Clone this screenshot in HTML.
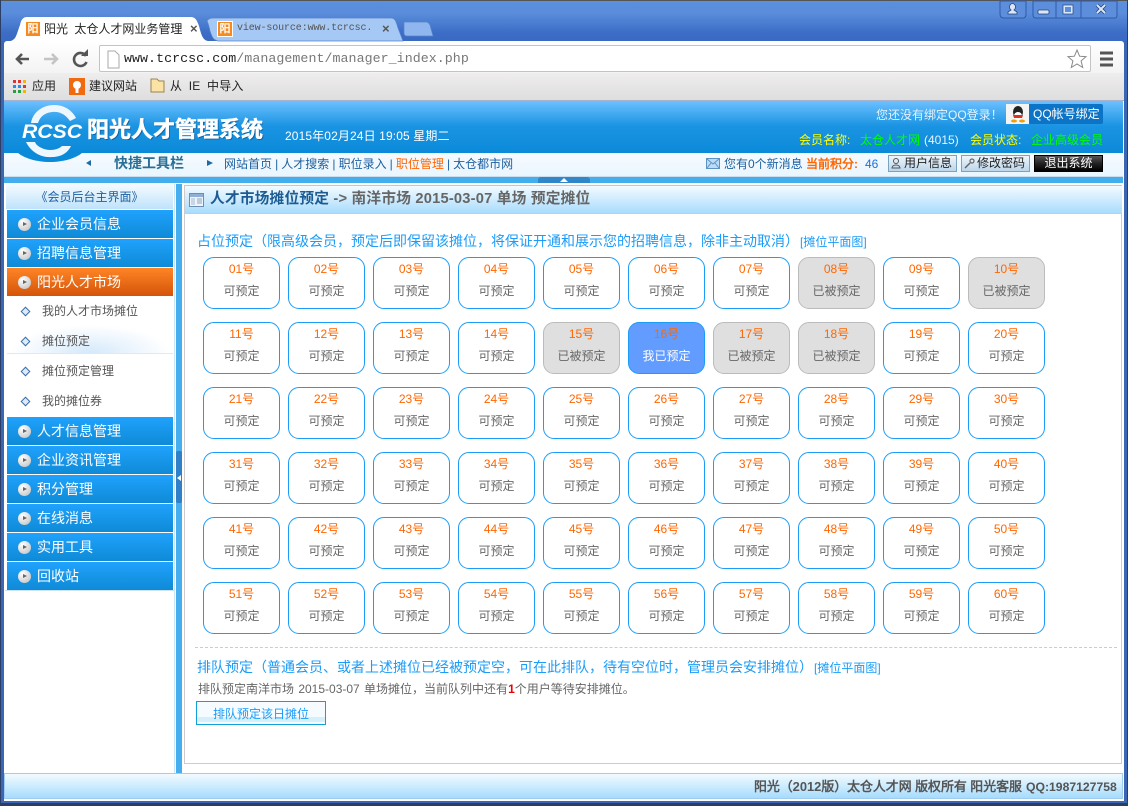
<!DOCTYPE html>
<html><head><meta charset="utf-8"><title>阳光人才管理系统</title><style>
html,body{margin:0;padding:0}
body{width:1128px;height:806px;overflow:hidden;position:relative;background:#3a66b4;font:12px/16px "Liberation Sans","WenQuanYi Zen Hei",sans-serif;color:#666}
div,svg{position:absolute;white-space:nowrap}
.m{left:7px;width:166px;height:28px;background:linear-gradient(#20a2fd,#0e8ad6);color:#fff;font-size:14px;line-height:28px;text-indent:30px}
.m:before{content:"";position:absolute;left:11px;top:8px;width:13px;height:13px;border-radius:7px;background:radial-gradient(circle at 35% 30%,#fff,#ccc 75%,#aaa)}
.m:after{content:"";position:absolute;left:16px;top:12px;border-left:4px solid #666;border-top:2.5px solid transparent;border-bottom:2.5px solid transparent}
.o{background:linear-gradient(#ff8526,#d4540a)}
.s{left:42px;color:#555}
.d{left:22px;width:5px;height:5px;transform:rotate(45deg);border:1px solid #3a6ea8;background:#dfeaf6}
.c{width:75px;height:50px;border:1px solid #1a9cf8;border-radius:11px;background:#fff;text-align:center}
.c u{position:absolute;left:0;right:0;top:3px;text-decoration:none;color:#f60}
.c em{position:absolute;left:0;right:0;top:25px;font-style:normal;color:#666}
.g{background:#dfdfdf;border-color:#bbb}
.y{background:#639cff;border-color:#1a9cf8}
.y em{color:#fff}
.t{color:#1a9cf8;font-size:14px}
.t span{font-size:12px}
.b{top:155px;height:15px;border:1px solid #7ba3c0;background:linear-gradient(#eef5fb,#bcd6ea);color:#222;line-height:15px;text-indent:15px}
</style></head><body>
<div style="left:0;top:0;width:1128px;height:41px;background:linear-gradient(#5b90dd,#5a8ddb 12px,#3c6dc6 32px,#3a69c2);border-top:1px solid #555;box-sizing:border-box"></div>
<div style="left:0;top:0;width:1px;height:806px;background:#2b3f66"></div>
<div style="left:1127px;top:0;width:1px;height:806px;background:#2b3f66"></div>
<div style="left:0;top:803px;width:1128px;height:3px;background:#2b3f66"></div>
<div style="left:4px;top:41px;width:1120px;height:32px;background:linear-gradient(#fff,#f3f3f3);border-radius:3px 3px 0 0"></div>
<div style="left:4px;top:73px;width:1120px;height:27px;background:linear-gradient(#efeded,#dedede)"></div>
<svg style="left:0;top:0" width="1128" height="100">
<path d="M218 41c-5-1-6-4-8-10-1-5-2-8-3-10 1-2 3-3 6-3h178c4 0 5 3 7 10l5 13z" fill="#a6c8f4" stroke="#5584cc" stroke-width=".7"/>
<path d="M404 22h22c2 0 3 1 4 3l3 11h-26c-2 0-3-1-3-3z" fill="#8fb6ee" stroke="#5584cc" stroke-width=".7"/>
<path d="M5 44c2-3 7-2 10-6 2-3 3-8 5-13 1-5 3-8 7-8h164c4 0 6 3 8 9 2 7 3 14 9 15z" fill="#fff"/>
<path d="M1000 1v13c0 3 2 4 4 4h19c2 0 3-1 3-4V1z" fill="#5d8edb" stroke="#2f5aa8"/>
<path d="M1033 1v14c0 2 1 3 3 3h79c1 0 2-1 2-3V1z" fill="#5d8edb" stroke="#2f5aa8"/>
<path d="M1056 1v17M1081 1v17" stroke="#2f5aa8" fill="none"/>
<path d="M1008 14v-2l3-2a3 3.5 0 1 1 3 0l3 2v2z" fill="#dbe6f7" stroke="#24457f" stroke-width=".8"/>
<rect x="1038" y="10" width="11" height="4" rx="1" fill="#dbe6f7" stroke="#24457f" stroke-width=".8"/>
<rect x="1064" y="6" width="8" height="7" fill="none" stroke="#dbe6f7" stroke-width="2"/>
<rect x="1063" y="5" width="10" height="9" fill="none" stroke="#24457f" stroke-width=".7"/>
<path d="M1097 5l8 8M1105 5l-8 8" stroke="#24457f" stroke-width="3.6"/>
<path d="M1097 5l8 8M1105 5l-8 8" stroke="#dbe6f7" stroke-width="2"/>
<path d="M17 59h12M22 54l-5 5 5 5" fill="none" stroke="#555" stroke-width="2.6"/>
<path d="M57 59H44M52 54l5 5-5 5" fill="none" stroke="#c4c4c4" stroke-width="2.6"/>
<path d="M86 56a6.500 6.500 0 1 0 .5 6" fill="none" stroke="#555" stroke-width="2.6"/>
<path d="M81 56h7v-7z" fill="#555"/>
</svg>
<div style="left:26px;top:22px;width:14px;height:14px;background:#f58a1f;color:#fff;font-size:11px;line-height:14px;text-align:center;font-weight:bold">阳</div>
<div style="left:44px;top:21px;color:#222;font-size:12px;width:139px;overflow:hidden;word-spacing:3px">阳光 太仓人才网业务管理</div>
<div style="left:190px;top:21px;color:#555;font-size:13px;font-weight:bold">×</div>
<div style="left:218px;top:22px;width:14px;height:14px;background:#f58a1f;color:#fff;font-size:11px;line-height:14px;text-align:center;font-weight:bold;outline:1px solid #fff">阳</div>
<div style="left:237px;top:21px;width:135px;overflow:hidden;color:#555;font:10px/16px 'Liberation Mono',monospace;letter-spacing:-.12px">view-source:www.tcrcsc.</div>
<div style="left:382px;top:21px;color:#555;font-size:13px;font-weight:bold">×</div>
<div style="left:99px;top:45px;width:990px;height:25px;background:#fff;border:1px solid #c4c4c4;border-radius:2px"></div>
<svg style="left:0;top:41px" width="1128" height="59">
<path d="M108 10h7l4 4v13h-11z" fill="#fff" stroke="#aaa"/>
<path d="M1077 9l2.600 6.200 6.400.5-4.900 4.200 1.600 6.600-5.700-3.500-5.700 3.500 1.600-6.600-4.900-4.200 6.400-.5z" fill="#fff" stroke="#888"/>
<path d="M1100 12h13M1100 18h13M1100 24h13" stroke="#555" stroke-width="3"/>
<rect x="13" y="39" width="3" height="3" fill="#d33"/><rect x="18" y="39" width="3" height="3" fill="#d33"/><rect x="23" y="39" width="3" height="3" fill="#f5b400"/>
<rect x="13" y="44" width="3" height="3" fill="#2a8af0"/><rect x="18" y="44" width="3" height="3" fill="#2a8af0"/><rect x="23" y="44" width="3" height="3" fill="#d33"/>
<rect x="13" y="49" width="3" height="3" fill="#2a9d40"/><rect x="18" y="49" width="3" height="3" fill="#2a9d40"/><rect x="23" y="49" width="3" height="3" fill="#f5b400"/>
<rect x="69" y="37" width="16" height="17" fill="#f06a10"/><circle cx="77" cy="44" r="4" fill="#fff"/><rect x="75.500" y="47" width="3" height="5" fill="#fff"/>
<path d="M151 38h6l2 2h5v11h-13z" fill="#fbe3a6" stroke="#9a8450"/>
</svg>
<div style="left:124px;top:51px;font:13.3px/16px 'Liberation Mono',monospace;color:#222;letter-spacing:.04px">www.tcrcsc.com<span style="color:#777">/management/manager_index.php</span></div>
<div style="left:32px;top:78px;color:#222">应用</div>
<div style="left:89px;top:78px;color:#222">建议网站</div>
<div style="left:170px;top:78px;color:#222;word-spacing:3px;letter-spacing:.2px">从 IE 中导入</div>

<div style="left:4px;top:100px;width:1120px;height:1px;background:#a9b4cc"></div>
<div style="left:4px;top:101px;width:1120px;height:700px;background:#fff"></div>
<div style="left:4px;top:101px;width:1119px;height:52px;background:linear-gradient(#6cc0ff,#1a94e2 25px,#0b8ad9)"></div>
<div style="left:4px;top:153px;width:1119px;height:24px;background:linear-gradient(#f6fbff,#e9f5fe)"></div>
<div style="left:4px;top:176px;width:1119px;height:7px;background:#43aeee;border-top:1px solid #cde;box-sizing:border-box"></div>
<div style="left:538px;top:177px;width:52px;height:6px;background:#2f86c8;border-radius:3px 3px 0 0"></div>
<svg style="left:560px;top:178px" width="8" height="5"><path d="M4 0l4 4H0z" fill="#fff"/></svg>
<svg style="left:0;top:100px" width="100" height="70">
<path d="M18 53C24 58 36 62 50 62S76 58 82 53z" fill="#0b8ad9"/>
<path d="M31 23C33 11 44 5 54 5 64 5 72 10 76 18L70 21C66 15 60 11 52 12 44 13 40 17 38 23z" fill="#eef7fd"/>
<path d="M26 42C31 52 41 58 52 57 60 57 67 54 71 46L62 46C58 50 50 51 44 49 39 47 36 45 35 42z" fill="#eef7fd"/>
<text x="22" y="38" fill="#fff" font-family="Liberation Sans" font-weight="bold" font-style="italic" font-size="19" textLength="60" lengthAdjust="spacingAndGlyphs">RCSC</text>
</svg>
<div style="left:87px;top:113px;color:#fff;font:bold 22px/30px 'Noto Sans CJK SC',sans-serif;-webkit-text-stroke:.5px #fff;text-shadow:1px 1px 0 #0d5f9e">阳光人才管理系统</div>
<div style="left:285px;top:128px;color:#fff;letter-spacing:.12px">2015年02月24日 19:05 星期二</div>
<svg style="left:84px;top:159px" width="130" height="8"><path d="M2 4l5-3v6z" fill="#1f6aa0"/><path d="M129 4l-6-3v6z" fill="#1f6aa0"/></svg>
<div style="left:114px;top:155px;color:#2a6f94;font:bold 14px/16px 'Noto Sans CJK SC',sans-serif">快捷工具栏</div>
<div style="left:224px;top:156px;color:#1d5f9f;word-spacing:-.25px">网站首页 | 人才搜索 | 职位录入 | <span style="color:#f60">职位管理</span> | 太仓都市网</div>
<div style="left:876px;top:107px;color:#e4f3ff">您还没有绑定QQ登录！</div>
<div style="left:1006px;top:104px;width:97px;height:20px;background:#0c74c6;border-radius:2px"></div>
<div style="left:1006px;top:104px;width:23px;height:20px;background:#f4f4f4"></div>
<svg style="left:1009px;top:105px" width="18" height="18"><ellipse cx="9" cy="7" rx="5" ry="6" fill="#222"/><ellipse cx="9" cy="11" rx="4" ry="4" fill="#fff"/><path d="M4 10h10l-1 3H5z" fill="#e0301e"/><ellipse cx="5" cy="16" rx="3" ry="1.5" fill="#f5a000"/><ellipse cx="13" cy="16" rx="3" ry="1.5" fill="#f5a000"/></svg>
<div style="left:1033px;top:106px;color:#fff">QQ帐号绑定</div>
<div style="left:799px;top:132px;color:#ff0">会员名称:</div>
<div style="left:860px;top:132px;color:#0f0">太仓人才网</div>
<div style="left:924px;top:132px;color:#e8f4ff">(4015)</div>
<div style="left:970px;top:132px;color:#ff0">会员状态:</div>
<div style="left:1031px;top:132px;color:#0f0">企业高级会员</div>
<svg style="left:706px;top:158px" width="14" height="12"><rect x=".5" y=".5" width="13" height="10" fill="#bcdcf6" stroke="#5b93c4"/><path d="M1 1l6 5 6-5M1 10l4-5M13 10l-4-5" fill="none" stroke="#5b93c4"/></svg>
<div style="left:724px;top:156px;color:#1d5f9f">您有0个新消息</div>
<div style="left:806px;top:156px;color:#f60;font-weight:bold">当前积分:</div>
<div style="left:865px;top:156px;color:#1a70e0">46</div>
<div class="b" style="left:888px;width:67px">用户信息</div>
<div class="b" style="left:961px;width:67px">修改密码</div>
<div class="b" style="left:1034px;width:67px;background:linear-gradient(#555,#222 50%,#000);border-color:#000;color:#fff;text-indent:0;text-align:center">退出系统</div>
<svg style="left:891px;top:157px" width="150" height="13"><circle cx="5" cy="4" r="2.5" fill="none" stroke="#555"/><path d="M1 11c0-4 8-4 8 0z" fill="none" stroke="#555"/><circle cx="81" cy="4" r="2" fill="none" stroke="#666" stroke-width="1.2"/><path d="M79 6l-5 5" stroke="#666" stroke-width="1.5"/></svg>

<div style="left:5px;top:184px;width:169px;height:590px;background:#fff;border-right:1px solid #cbe4f7"></div>
<div style="left:6px;top:184px;width:167px;height:25px;background:linear-gradient(#f4fbff,#bfe3fb);text-align:center;line-height:26px;color:#1d5f9f">《会员后台主界面》</div>
<div class="m" style="top:210px">企业会员信息</div>
<div class="m" style="top:239px">招聘信息管理</div>
<div class="m o" style="top:268px">阳光人才市场</div>
<div style="left:7px;top:323px;width:166px;height:30px;background:radial-gradient(ellipse 80px 28px at 50% 100%,#d5e9fb,#fff 100%);border-bottom:1px solid #e4e6f2"></div>
<div class="d" style="top:308px"></div><div class="s" style="top:303px">我的人才市场摊位</div>
<div class="d" style="top:338px"></div><div class="s" style="top:333px">摊位预定</div>
<div class="d" style="top:368px"></div><div class="s" style="top:363px">摊位预定管理</div>
<div class="d" style="top:398px"></div><div class="s" style="top:393px">我的摊位券</div>
<div class="m" style="top:417px">人才信息管理</div>
<div class="m" style="top:446px">企业资讯管理</div>
<div class="m" style="top:475px">积分管理</div>
<div class="m" style="top:504px">在线消息</div>
<div class="m" style="top:533px">实用工具</div>
<div class="m" style="top:562px">回收站</div>
<div style="left:5px;top:590px;width:169px;height:1px;background:#cbe4f7"></div>
<div style="left:176px;top:184px;width:6px;height:590px;background:#45aeee"></div>
<div style="left:176px;top:451px;width:6px;height:52px;background:#2f80c6;border-radius:2px"></div>
<svg style="left:177px;top:474px" width="5" height="8"><path d="M0 4l4-3v6z" fill="#fff"/></svg>

<div style="left:184px;top:185px;width:938px;height:579px;border:1px solid #ccc;border-top:1px solid #9fd0f5;box-sizing:border-box;background:#fff"></div>
<div style="left:185px;top:186px;width:937px;height:27px;background:linear-gradient(#f3fbff,#a9dcfd);border-bottom:1px solid #ccc"></div>
<svg style="left:189px;top:193px" width="15" height="14"><rect x=".5" y=".5" width="14" height="13" fill="#eef4fa" stroke="#6d8fb4"/><rect x="1" y="1" width="13" height="3" fill="#8fb0d4"/><rect x="2" y="5" width="4" height="7" fill="#c7d7e8"/><path d="M8 6h5M8 8h5M8 10h5" stroke="#8aa4c0"/></svg>
<div style="left:210px;top:191px;font:bold 14.7px/16px 'Liberation Sans','Noto Sans CJK SC',sans-serif;color:#1c5c92;letter-spacing:.2px">人才市场摊位预定 <span style="color:#666">-&gt; 南洋市场 2015-03-07 单场 预定摊位</span></div>

<div class="t" style="left:197px;top:233px">占位预定（限高级会员，预定后即保留该摊位，将保证开通和展示您的招聘信息，除非主动取消）<span style="margin-left:1px">[摊位平面图]</span></div>

<div class="c" style="left:203px;top:257px"><u>01号</u><em>可预定</em></div>
<div class="c" style="left:288px;top:257px"><u>02号</u><em>可预定</em></div>
<div class="c" style="left:373px;top:257px"><u>03号</u><em>可预定</em></div>
<div class="c" style="left:458px;top:257px"><u>04号</u><em>可预定</em></div>
<div class="c" style="left:543px;top:257px"><u>05号</u><em>可预定</em></div>
<div class="c" style="left:628px;top:257px"><u>06号</u><em>可预定</em></div>
<div class="c" style="left:713px;top:257px"><u>07号</u><em>可预定</em></div>
<div class="c g" style="left:798px;top:257px"><u>08号</u><em>已被预定</em></div>
<div class="c" style="left:883px;top:257px"><u>09号</u><em>可预定</em></div>
<div class="c g" style="left:968px;top:257px"><u>10号</u><em>已被预定</em></div>
<div class="c" style="left:203px;top:322px"><u>11号</u><em>可预定</em></div>
<div class="c" style="left:288px;top:322px"><u>12号</u><em>可预定</em></div>
<div class="c" style="left:373px;top:322px"><u>13号</u><em>可预定</em></div>
<div class="c" style="left:458px;top:322px"><u>14号</u><em>可预定</em></div>
<div class="c g" style="left:543px;top:322px"><u>15号</u><em>已被预定</em></div>
<div class="c y" style="left:628px;top:322px"><u>16号</u><em>我已预定</em></div>
<div class="c g" style="left:713px;top:322px"><u>17号</u><em>已被预定</em></div>
<div class="c g" style="left:798px;top:322px"><u>18号</u><em>已被预定</em></div>
<div class="c" style="left:883px;top:322px"><u>19号</u><em>可预定</em></div>
<div class="c" style="left:968px;top:322px"><u>20号</u><em>可预定</em></div>
<div class="c" style="left:203px;top:387px"><u>21号</u><em>可预定</em></div>
<div class="c" style="left:288px;top:387px"><u>22号</u><em>可预定</em></div>
<div class="c" style="left:373px;top:387px"><u>23号</u><em>可预定</em></div>
<div class="c" style="left:458px;top:387px"><u>24号</u><em>可预定</em></div>
<div class="c" style="left:543px;top:387px"><u>25号</u><em>可预定</em></div>
<div class="c" style="left:628px;top:387px"><u>26号</u><em>可预定</em></div>
<div class="c" style="left:713px;top:387px"><u>27号</u><em>可预定</em></div>
<div class="c" style="left:798px;top:387px"><u>28号</u><em>可预定</em></div>
<div class="c" style="left:883px;top:387px"><u>29号</u><em>可预定</em></div>
<div class="c" style="left:968px;top:387px"><u>30号</u><em>可预定</em></div>
<div class="c" style="left:203px;top:452px"><u>31号</u><em>可预定</em></div>
<div class="c" style="left:288px;top:452px"><u>32号</u><em>可预定</em></div>
<div class="c" style="left:373px;top:452px"><u>33号</u><em>可预定</em></div>
<div class="c" style="left:458px;top:452px"><u>34号</u><em>可预定</em></div>
<div class="c" style="left:543px;top:452px"><u>35号</u><em>可预定</em></div>
<div class="c" style="left:628px;top:452px"><u>36号</u><em>可预定</em></div>
<div class="c" style="left:713px;top:452px"><u>37号</u><em>可预定</em></div>
<div class="c" style="left:798px;top:452px"><u>38号</u><em>可预定</em></div>
<div class="c" style="left:883px;top:452px"><u>39号</u><em>可预定</em></div>
<div class="c" style="left:968px;top:452px"><u>40号</u><em>可预定</em></div>
<div class="c" style="left:203px;top:517px"><u>41号</u><em>可预定</em></div>
<div class="c" style="left:288px;top:517px"><u>42号</u><em>可预定</em></div>
<div class="c" style="left:373px;top:517px"><u>43号</u><em>可预定</em></div>
<div class="c" style="left:458px;top:517px"><u>44号</u><em>可预定</em></div>
<div class="c" style="left:543px;top:517px"><u>45号</u><em>可预定</em></div>
<div class="c" style="left:628px;top:517px"><u>46号</u><em>可预定</em></div>
<div class="c" style="left:713px;top:517px"><u>47号</u><em>可预定</em></div>
<div class="c" style="left:798px;top:517px"><u>48号</u><em>可预定</em></div>
<div class="c" style="left:883px;top:517px"><u>49号</u><em>可预定</em></div>
<div class="c" style="left:968px;top:517px"><u>50号</u><em>可预定</em></div>
<div class="c" style="left:203px;top:582px"><u>51号</u><em>可预定</em></div>
<div class="c" style="left:288px;top:582px"><u>52号</u><em>可预定</em></div>
<div class="c" style="left:373px;top:582px"><u>53号</u><em>可预定</em></div>
<div class="c" style="left:458px;top:582px"><u>54号</u><em>可预定</em></div>
<div class="c" style="left:543px;top:582px"><u>55号</u><em>可预定</em></div>
<div class="c" style="left:628px;top:582px"><u>56号</u><em>可预定</em></div>
<div class="c" style="left:713px;top:582px"><u>57号</u><em>可预定</em></div>
<div class="c" style="left:798px;top:582px"><u>58号</u><em>可预定</em></div>
<div class="c" style="left:883px;top:582px"><u>59号</u><em>可预定</em></div>
<div class="c" style="left:968px;top:582px"><u>60号</u><em>可预定</em></div>

<div style="left:195px;top:647px;width:922px;border-top:1px dashed #ccc"></div>
<div class="t" style="left:197px;top:659px">排队预定（普通会员、或者上述摊位已经被预定空，可在此排队，待有空位时，管理员会安排摊位）<span style="margin-left:1px">[摊位平面图]</span></div>
<div style="left:198px;top:681px;word-spacing:1px">排队预定南洋市场 2015-03-07 单场摊位，当前队列中还有<b style="color:#e00">1</b>个用户等待安排摊位。</div>
<div style="left:196px;top:701px;width:128px;height:22px;border:1px solid #12a0d8;background:linear-gradient(#f6fbff 68%,#d6f0fb 68%,#d6f0fb 92%,#f6fbff 92%);text-align:center;line-height:24px;color:#1a9cf8">排队预定该日摊位</div>

<div style="left:4px;top:773px;width:1119px;height:26px;border:1px solid #a0ccf0;box-sizing:border-box;background:linear-gradient(#f3fbff,#a6dcfd)"></div>
<div style="left:754px;top:779px;font-weight:bold;color:#555;font-size:12.9px">阳光（2012版）太仓人才网 版权所有 阳光客服</div>
<div style="left:1026px;top:779px;font-weight:bold;color:#555;font-size:12.2px">QQ:1987127758</div>
</body></html>
